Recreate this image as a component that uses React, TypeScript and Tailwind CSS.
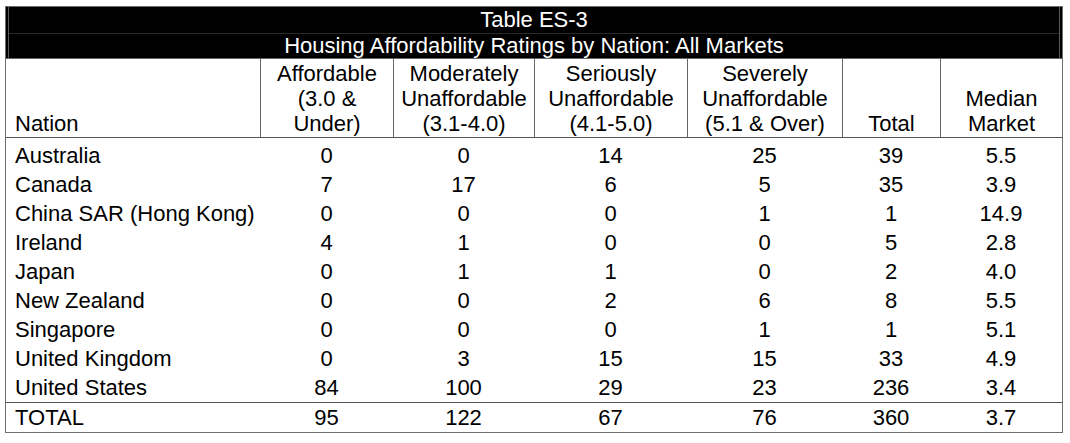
const rows: [string, string, string, string, string, string, string][] = [
  ['Australia', '0', '0', '14', '25', '39', '5.5'],
  ['Canada', '7', '17', '6', '5', '35', '3.9'],
  ['China SAR (Hong Kong)', '0', '0', '0', '1', '1', '14.9'],
  ['Ireland', '4', '1', '0', '0', '5', '2.8'],
  ['Japan', '0', '1', '1', '0', '2', '4.0'],
  ['New Zealand', '0', '0', '2', '6', '8', '5.5'],
  ['Singapore', '0', '0', '0', '1', '1', '5.1'],
  ['United Kingdom', '0', '3', '15', '15', '33', '4.9'],
  ['United States', '84', '100', '29', '23', '236', '3.4'],
];

const total = ['TOTAL', '95', '122', '67', '76', '360', '3.7'];

const cols = 'grid grid-cols-[254px_133px_141px_153px_155px_98px_122px]';

function DataRow({ cells }: { cells: string[] }) {
  return (
    <div className={`${cols} h-[29px] leading-[29px]`}>
      {cells.map((c, i) =>
        i === 0 ? (
          <div key={i} className="pl-[9px] whitespace-nowrap">
            {c}
          </div>
        ) : (
          <div key={i} className="text-center">
            {c}
          </div>
        ),
      )}
    </div>
  );
}

export default function App() {
  return (
    <div className="w-[1070px] h-[443px] bg-white font-['Liberation_Sans',Arial,sans-serif] text-[22px] text-black">
      <div className="ml-[5px] mt-[6px] w-[1058px] border border-[#6e6e6e]">
        {/* title band */}
        <div className="bg-black px-[2px] border-b border-[#666]">
          <div className="border-x border-[#5a5a5a] text-white text-center whitespace-nowrap">
            <div className="h-[26px] leading-[26px]">Table ES-3</div>
            <div className="h-px bg-[#2a2a2a]" />
            <div className="h-[24px] leading-[24px]">Housing Affordability Ratings by Nation: All Markets</div>
          </div>
        </div>

        {/* column headers */}
        <div className={`${cols} h-[79px] border-b border-[#555] leading-[25px] whitespace-nowrap`}>
          <div className="flex items-end pl-[9px] pb-px">Nation</div>
          <div className="flex items-end justify-center border-l border-[#666] pb-px text-center">
            Affordable
            <br />
            (3.0 &amp;
            <br />
            Under)
          </div>
          <div className="flex items-end justify-center border-l border-[#666] pb-px text-center">
            Moderately
            <br />
            Unaffordable
            <br />
            (3.1-4.0)
          </div>
          <div className="flex items-end justify-center border-l border-[#666] pb-px text-center">
            Seriously
            <br />
            Unaffordable
            <br />
            (4.1-5.0)
          </div>
          <div className="flex items-end justify-center border-l border-[#666] pb-px text-center">
            Severely
            <br />
            Unaffordable
            <br />
            (5.1 &amp; Over)
          </div>
          <div className="flex items-end justify-center border-l border-[#666] pb-px">Total</div>
          <div className="flex items-end justify-center border-l border-[#666] pb-px text-center">
            Median
            <br />
            Market
          </div>
        </div>

        {/* body */}
        <div className="pt-[3px] border-b border-[#555]">
          {rows.map((r) => (
            <DataRow key={r[0]} cells={r} />
          ))}
        </div>
        <DataRow cells={total} />
      </div>
    </div>
  );
}
